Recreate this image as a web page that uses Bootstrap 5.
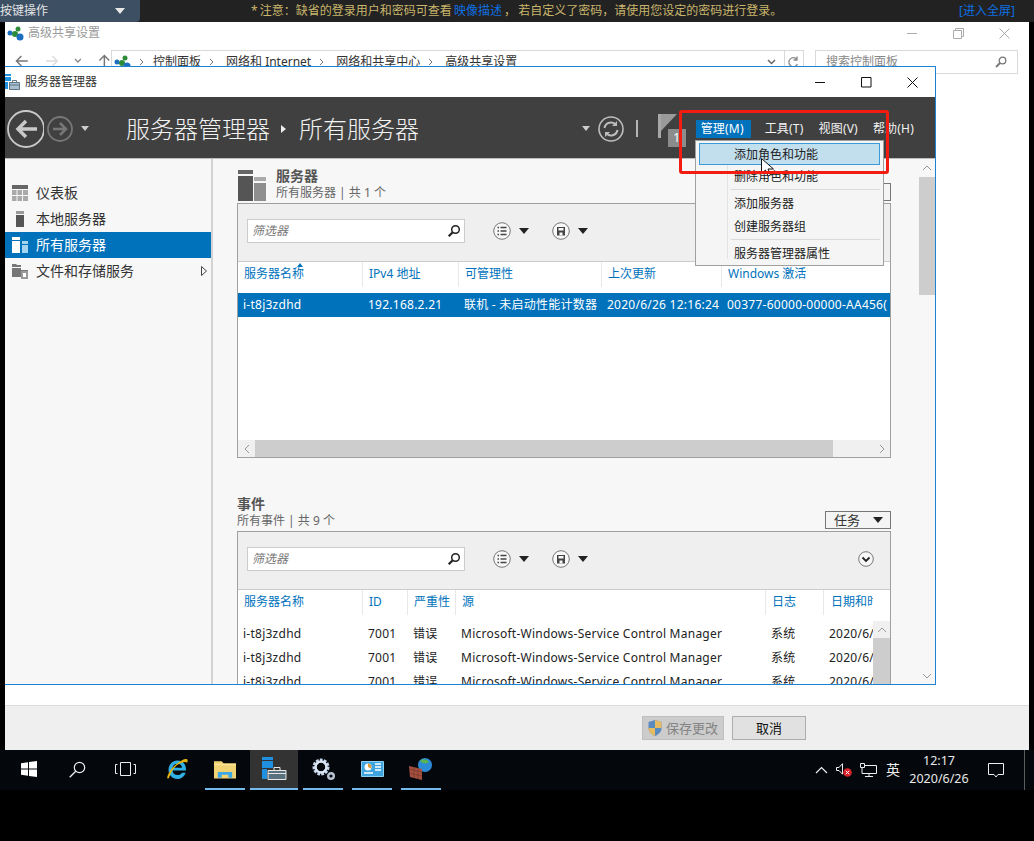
<!DOCTYPE html>
<html lang="zh-CN">
<head>
<meta charset="utf-8">
<title>服务器管理器</title>
<link href="https://cdn.jsdelivr.net/npm/bootstrap@5.3.0/dist/css/bootstrap.min.css" rel="stylesheet">
<style>
html,body{margin:0;background:#000;}
body{font-family:"Noto Sans","Noto Sans CJK SC",sans-serif;font-size:12px;line-height:16px;color:#222;}
.desk{position:relative;width:1034px;height:841px;overflow:hidden;background:#000;}
.top-strip{height:22px;background:#222;}
.key-menu{width:140px;height:22px;background:#3c4f63;border-bottom-right-radius:4px;color:#e4e4e4;padding-right:15px;}
.notice{color:#c9b56c;margin-left:109px;width:710px;white-space:pre;word-spacing:-1px;}
.notice a,.full-link{color:#0f6fe0;text-decoration:none;}
.tri{width:0;height:0;border-left:5px solid transparent;border-right:5px solid transparent;border-top:6px solid #222;display:inline-block;flex:none;}
.tri-white{border-top-color:#e8e8e8;}
.tri-grey{border-left-width:4px;border-right-width:4px;border-top-width:5px;border-top-color:#ccc;}
.back-win{height:728px;width:1024px;margin-left:5px;background:#fff;}
.back-title{height:22px;color:#9a9a9a;padding:0 2px 0 2px;}
.back-title .ttl{margin-left:4px;}
.ctl-box{width:46px;display:flex;justify-content:center;}
.nav-row{height:28px;padding-left:10px;padding-top:6px;}
.nav-arrows{width:96px;}
.addr{width:693px;height:24px;border:1px solid #d9d9d9;padding-left:2px;color:#333;}
.addr .crumb{white-space:nowrap;}
.crumb-first{margin-left:5px;}
.addr-end{margin-left:auto;height:100%;}
.addr-sep{width:1px;background:#d9d9d9;height:100%;margin:0 2px 0 8px;}
.search-back{width:203px;height:24px;border:1px solid #d9d9d9;margin-left:11px;padding:0 10px;color:#888;}
.spacer-fill{flex:1;}
.back-foot{height:45px;background:#efefef;border-top:1px solid #dcdcdc;padding:10px 0 0 637px;gap:8px;}
.w-btn{height:24px;border:1px solid #adadad;background:#e1e1e1;color:#111;font-size:13px;}
.w-btn.off{width:82px;background:#ccc;border-color:#bfbfbf;color:#838383;}
.w-btn.on{width:74px;}
.srv-win{position:absolute;left:5px;top:66px;width:931px;height:619px;background:#fff;border:1px solid #1c82d4;border-left:0;}
.srv-bar{height:30px;color:#333;}
.srv-bar .app-ico{margin-right:5px;}
.srv-bar .ctls{margin-left:auto;}
.srv-bar .c{width:46px;display:flex;justify-content:center;}
.srv-head{height:62px;background:#404040;border-bottom:1px solid #bdbdbd;color:#f2f2f2;padding-top:2px;}
.back-btn{margin-left:1px;flex:none;}
.fwd-btn{margin-left:3px;flex:none;}
.h-title{font-size:24px;line-height:30px;margin-left:37px;white-space:nowrap;font-weight:300;}
.h-sep{margin:0 13px 0 11px;}
.h-right{margin-left:auto;height:100%;padding-right:16px;}
.h-vline{width:2px;height:17px;background:#b5b5b5;margin:0 20px 0 12px;}
.flag-wrap{position:relative;width:30px;height:34px;margin-right:8px;}
.flag-wrap svg{display:block;margin-top:2px;}
.flag-num{position:absolute;left:10px;top:17px;width:18px;height:18px;background:#8c8c8c;color:#fff;text-align:center;font-size:12px;line-height:18px;}
.m-item{height:18px;line-height:18px;padding:0 5px;white-space:nowrap;color:#f2f2f2;letter-spacing:.2px;}
.m-item.act{background:#0072bc;color:#fff;width:55px;}
.m-item.gap-first{margin-left:9px;}
.m-item.gap-next{margin-left:5px;}
.srv-main{height:525px;}
.side{width:206px;flex:none;background:#f7f7f7;padding-top:21px;border-right:2px solid #d3d3d3;box-sizing:content-box;}
.side-item{height:26px;padding-left:7px;font-size:14px;color:#333;}
.side-item .lbl{margin-left:8px;}
.side-item.sel{background:#0072bc;color:#fff;}
.side-item .caret-r{margin-left:auto;margin-right:4px;}
.content{flex:1;background:#f7f7f7;padding:0 28px 0 24px;overflow:hidden;min-width:0;position:relative;}
.sec-head{height:33px;}
.sec-head.first{margin-top:11px;gap:10px;}
.sec-head.second{height:34px;margin-top:39px;}
.sec-t{font-size:14px;font-weight:700;line-height:14px;color:#555;margin-top:-1px;}
.second .sec-t{line-height:15px;}
.sec-s{color:#666;line-height:16px;margin-top:2px;}
.task-btn{margin-left:auto;width:66px;height:18px;border:1px solid #777;background:#f4f4f4;padding:0 7px 0 8px;color:#333;font-size:13px;}
.first .task-btn{position:absolute;right:28px;top:24px;}
.second .task-btn{margin-top:14px;}
.panel{border:1px solid #a0a0a0;background:#fff;width:654px;overflow:hidden;}
.panel.one{height:255px;}
.panel.two{height:160px;border-bottom:0;}
.tools{height:58px;background:#efefef;border-bottom:1px solid #ccc;padding:0 0 3px 9px;flex:none;}
.filter{width:218px;height:24px;border:1px solid #ccc;background:#fff;padding:0 3px 0 4px;color:#7a7a7a;font-style:italic;}
.t-btn{gap:8px;}
.t-btn.a{margin-left:28px;}
.t-btn.b{margin-left:23px;}
.cols-s,.cols-e{display:grid;}
.cols-s{grid-template-columns:124px 96px 143px 120px 1fr;}
.cols-e{grid-template-columns:124px 45px 48px 310px 58px 1fr;}
.heads{height:31px;color:#0072bc;position:relative;}
.heads.cols-e{width:635px;}
.heads>div{padding-left:6px;border-left:1px solid #e8e8e8;line-height:24px;white-space:nowrap;overflow:hidden;height:25px;}
.heads>div:first-child{border-left:0;}
.heads>div:last-child{padding-left:7px;}
.sort-up{position:absolute;left:59px;top:1px;width:0;height:0;border-left:3px solid transparent;border-right:3px solid transparent;border-bottom:4px solid #0072bc;}
.d-row{height:24px;line-height:24px;white-space:nowrap;letter-spacing:.25px;}
.d-row>div{padding-left:6px;overflow:hidden;}
.d-row>div:first-child{padding-left:5px;}
.d-row.sel{background:#0072bc;color:#fff;}
.fill-one{height:123px;}
.h-scroll{height:17px;background:#f0f0f0;}
.h-scroll .arr{width:17px;flex:none;display:flex;justify-content:center;}
.h-thumb{width:578px;background:#cdcdcd;}
.ev-body{position:relative;flex:1;min-height:0;overflow:hidden;padding-top:1px;}
.ev-list{width:635px;overflow:hidden;}
.ev-scroll{position:absolute;right:0;top:0;bottom:0;width:17px;background:#f0f0f0;}
.ev-scroll .up{height:17px;display:flex;justify-content:center;align-items:center;}
.ev-scroll .th{height:60px;background:#cdcdcd;}
.v-scroll{width:16px;flex:none;background:#f7f7f7;}
.v-scroll .up{height:18px;display:flex;justify-content:center;align-items:center;}
.v-scroll .th{height:118px;background:#cdcdcd;}
.v-scroll .dn{margin-top:auto;height:17px;display:flex;justify-content:center;align-items:center;}
.menu-pop{position:absolute;left:695px;top:140px;width:189px;height:126px;background:#f5f5f5;border:1px solid #a0a0a0;padding:2px 3px;color:#222;}
.menu-pop .gutter{position:absolute;left:31px;top:2px;bottom:6px;width:1px;background:#e2e2e2;}
.mi{height:22px;line-height:24px;padding-left:35px;position:relative;}
.mi.hot{background:#c2dfee;outline:1px solid #3b9ad9;outline-offset:-1px;}
.mi-sep{height:1px;background:#dadada;margin:2px 0 2px 32px;}
.m2{margin-top:1px;}
.red-mark{position:absolute;left:679px;top:110px;width:210px;height:64px;border:3px solid #f21d10;border-radius:3px;pointer-events:none;}
.pointer{position:absolute;left:761px;top:158px;}
.taskbar{height:40px;background:#04070c;color:#eee;padding-left:5px;}
.tb-slot{height:40px;flex:none;display:flex;justify-content:center;align-items:center;padding-bottom:2px;}
.tb-plain{width:48px;}
.tb-plain.s-first{width:47px;}
.tb-plain.s-second{margin-left:1px;}
.tb-ie{width:56px;}
.tb-app{width:40px;margin-right:5px;border-bottom:2px solid #76b9ed;padding-bottom:0;}
.tb-app.wide-gap{margin-right:9px;}
.tb-app.cur{width:48px;background:#333;}
.tray{margin-left:auto;height:40px;}
.tray-ch{font-size:14px;margin-left:9px;}
.clock{width:74px;margin-left:2px;text-align:center;font-size:12.500px;line-height:18px;color:#e8e8e8;}
.notify{margin-left:12px;}
.show-desk{width:1px;height:40px;background:#5c5c5c;margin:0 9px 0 20px;}
</style>
</head>
<body>
<div class="desk">
  <div class="top-strip d-flex align-items-center">
    <div class="key-menu d-flex align-items-center justify-content-between"><span>按键操作</span><span class="tri tri-white"></span></div>
    <div class="notice"> * 注意：缺省的登录用户和密码可查看 <a href="#">映像描述</a> ， 若自定义了密码，请使用您设定的密码进行登录。</div>
    <a class="full-link" href="#">[进入全屏]</a>
  </div>

  <div class="back-win d-flex flex-column">
    <div class="back-title d-flex align-items-center">
      <svg width="17" height="15" viewBox="0 0 17 15"><circle cx="3" cy="7" r="2.500" fill="#1c6fc0"/><circle cx="11" cy="3" r="2.500" fill="#2e8b3a"/><circle cx="8" cy="8" r="3" fill="#2e8b3a"/><circle cx="13" cy="11" r="3.500" fill="#1c6fc0"/></svg>
      <span class="ttl">高级共享设置</span>
      <div class="d-flex align-items-center ms-auto">
        <span class="ctl-box"><svg width="11" height="11" viewBox="0 0 11 11"><path d="M0 5.500h10" stroke="#aaa"/></svg></span>
        <span class="ctl-box"><svg width="11" height="11" viewBox="0 0 11 11"><path d="M.5 2.500h8v8h-8zM2.500 2.500v-2h8v8h-2" fill="none" stroke="#aaa"/></svg></span>
        <span class="ctl-box"><svg width="11" height="11" viewBox="0 0 11 11"><path d="M.5.500l10 10M10.500.5l-10 10" stroke="#aaa"/></svg></span>
      </div>
    </div>
    <div class="nav-row d-flex align-items-start">
      <div class="nav-arrows d-flex align-items-center pt-1">
        <svg class="me-3" width="14" height="12" viewBox="0 0 14 12"><path d="M13 6H2M6.500 1L1.500 6l5 5" fill="none" stroke="#777" stroke-width="1.500"/></svg>
        <svg class="me-3" width="14" height="12" viewBox="0 0 14 12"><path d="M1 6h11M7.500 1l5 5-5 5" fill="none" stroke="#ddd" stroke-width="1.500"/></svg>
        <svg width="8" height="6" viewBox="0 0 8 6" class="me-3"><path d="M1 1l3 3 3-3" fill="none" stroke="#888" stroke-width="1.300"/></svg>
        <svg width="13" height="13" viewBox="0 0 13 13"><path d="M6.500 13V2M1.500 6.500l5-5 5 5" fill="none" stroke="#777" stroke-width="1.500"/></svg>
      </div>
      <div class="addr d-flex align-items-center">
        <svg width="17" height="15" viewBox="0 0 17 15"><circle cx="3" cy="7" r="2.500" fill="#1c6fc0"/><circle cx="11" cy="3" r="2.500" fill="#2e8b3a"/><circle cx="8" cy="8" r="3" fill="#2e8b3a"/><circle cx="13" cy="11" r="3.500" fill="#1c6fc0"/></svg>
        <svg class="ms-2" width="5" height="8" viewBox="0 0 5 8"><path d="M1 1l3 3-3 3" fill="none" stroke="#777"/></svg>
        <span class="crumb crumb-first ps-1">控制面板</span>
        <svg class="ms-2" width="5" height="8" viewBox="0 0 5 8"><path d="M1 1l3 3-3 3" fill="none" stroke="#777"/></svg>
        <span class="crumb ms-2 ps-1">网络和 Internet</span>
        <svg class="ms-2" width="5" height="8" viewBox="0 0 5 8"><path d="M1 1l3 3-3 3" fill="none" stroke="#777"/></svg>
        <span class="crumb ms-2 ps-1">网络和共享中心</span>
        <svg class="ms-2" width="5" height="8" viewBox="0 0 5 8"><path d="M1 1l3 3-3 3" fill="none" stroke="#777"/></svg>
        <span class="crumb ms-2 ps-1">高级共享设置</span>
        <div class="addr-end d-flex align-items-center">
          <svg width="9" height="6" viewBox="0 0 9 6"><path d="M1 1l3.500 3.500L8 1" fill="none" stroke="#666" stroke-width="1.500"/></svg>
          <span class="addr-sep"></span>
          <svg class="me-1" width="12" height="13" viewBox="0 0 12 13"><path d="M10 3.500A4.500 4.500 0 1 0 10.500 8M10 .5v3.500H6.500" fill="none" stroke="#888" stroke-width="1.300"/></svg>
        </div>
      </div>
      <div class="search-back d-flex align-items-center justify-content-between">
        <span>搜索控制面板</span>
        <svg width="12" height="12" viewBox="0 0 12 12"><circle cx="7.500" cy="4.500" r="3.300" fill="none" stroke="#777" stroke-width="1.300"/><path d="M5 7l-4 4" stroke="#777" stroke-width="1.800"/></svg>
      </div>
    </div>
    <div class="spacer-fill"></div>
    <div class="back-foot d-flex">
      <div class="w-btn off d-flex align-items-center justify-content-center gap-1">
        <svg width="14" height="16" viewBox="0 0 14 16"><path d="M7 0l6.500 2v6c0 4-3 6.500-6.500 8C3.500 14.500.5 12 .5 8V2z" fill="#5b8ac0"/><path d="M7 0l6.500 2v6H7zM7 8v8C3.500 14.500.5 12 .5 8z" fill="#e6bc62"/></svg>
        <span>保存更改</span>
      </div>
      <div class="w-btn on d-flex align-items-center justify-content-center">取消</div>
    </div>
  </div>

  <div class="taskbar d-flex align-items-center">
    <div class="tb-slot tb-plain s-first"><svg width="16" height="16" viewBox="0 0 16 16"><path d="M0 2.300l7-1V7.600H0zM8 1.100L16 0v7.600H8zM0 8.500h7v6.200l-7-1zM8 8.500h8V16l-8-1.100z" fill="#fff"/></svg></div>
    <div class="tb-slot tb-plain s-second"><svg width="17" height="17" viewBox="0 0 17 17"><circle cx="10.500" cy="6.500" r="5.200" fill="none" stroke="#eee" stroke-width="1.200"/><path d="M6.700 10.300L.7 16.300" stroke="#eee" stroke-width="1.300"/></svg></div>
    <div class="tb-slot tb-plain"><svg width="21" height="14" viewBox="0 0 21 14"><path d="M5.500.5h10v13h-10z" fill="none" stroke="#eee"/><path d="M2.500 2.500H.5v9h2M18.500 2.500h2v9h-2" fill="none" stroke="#eee"/></svg></div>
    <div class="tb-slot tb-ie"><svg width="24" height="24" viewBox="0 0 24 24"><path d="M21 13.500H7.500c.3 3 2.500 4.500 5 4.500 2 0 3.500-.8 4.500-2.300h3.800C19 19.800 16 22 12.300 22 7.500 22 3.500 18 3.500 12.800 3.500 7.600 7.500 3.500 12.500 3.500c5 0 8.500 4 8.500 8.500zM7.500 10.800h9.500c-.2-2.400-2-4-4.500-4s-4.600 1.600-5 4z" fill="#2fb1e6" fill-rule="evenodd"/><path d="M4 21C1 23 2 19 5 14 9 8 17 2 21 2c2 0 2 2 1 4-1-2-4-1-8 1C8 10 5 18 4 21z" fill="#e5b30f"/></svg></div>
    <div class="tb-slot tb-app"><svg width="22" height="19" viewBox="0 0 23 19"><path d="M0 1h8l2 2h13v16H0z" fill="#f2d374"/><path d="M0 4h23v1H0z" fill="#ffe9a6"/><path d="M4 18v-6h15v6h-4v-3H8v3z" fill="#3da8e6"/></svg></div>
    <div class="tb-slot tb-app cur"><svg width="25" height="24" viewBox="0 0 25 24"><path d="M0 0h11v3H0z" fill="#1f8fe0"/><path d="M0 4h11v7H0zM0 12h5v10H0z" fill="#1f8fe0"/><path d="M6 13.500h18v9H6z" fill="#59707f" stroke="#e8e8e8"/><path d="M6 16.500h18" stroke="#e8e8e8"/><path d="M12 13v-2.500h6V13" fill="none" stroke="#e8e8e8"/></svg></div>
    <div class="tb-slot tb-app wide-gap"><svg width="25" height="25" viewBox="0 0 25 25"><circle cx="10" cy="10" r="6.500" fill="none" stroke="#c5d5ec" stroke-width="4" stroke-dasharray="2.500 1.100"/><circle cx="10" cy="10" r="5.500" fill="none" stroke="#dbe6f5" stroke-width="2.500"/><circle cx="20" cy="19" r="2.800" fill="none" stroke="#b8c4d4" stroke-width="2.400"/></svg></div>
    <div class="tb-slot tb-app wide-gap"><svg width="23" height="16" viewBox="0 0 23 16"><path d="M.5.500h22v15H.500z" fill="#3fa3de" stroke="#8fd0f2"/><circle cx="7" cy="6" r="3.500" fill="#fff"/><path d="M7 2.500V6l3 1.500A3.500 3.500 0 0 0 7 2.500z" fill="#e29a2c"/><path d="M14 3h6M14 6h6M14 9h6M3 12h9" stroke="#fff" stroke-width="1.400"/></svg></div>
    <div class="tb-slot tb-app"><svg width="24" height="24" viewBox="0 0 24 24"><circle cx="16" cy="8" r="7" fill="#2c8bd6"/><path d="M11 4c3-3 7-2 9 1-2 2-6 2-9-1z" fill="#59b34f"/><path d="M0 9l13 3v11L1 20z" fill="#a4503f"/><path d="M0 12l13 3M.5 16l12.500 3M5 10v11M9 11v11" stroke="#7a362a" stroke-width=".7"/></svg></div>
    <div class="tray d-flex align-items-center">
      <svg class="me-2" width="13" height="8" viewBox="0 0 13 8"><path d="M1 7l5.500-5.500L12 7" fill="none" stroke="#eee" stroke-width="1.200"/></svg>
      <svg class="me-2" width="16" height="14" viewBox="0 0 16 14"><path d="M.5 4.500h2.500L6.500.7v10.500L3 7.500H.5z" fill="none" stroke="#eee"/><circle cx="11.500" cy="9.500" r="4.300" fill="#d8232a"/><path d="M9.800 7.800l3.400 3.400M13.200 7.800l-3.400 3.400" stroke="#fff"/></svg>
      <svg width="17" height="14" viewBox="0 0 17 14"><path d="M3 2.500h13.500v8H2V5M9 10.500v3M5 13.500h8" fill="none" stroke="#eee"/><path d="M.5.500h4v4h-4z" fill="#04070c" stroke="#eee"/></svg>
      <span class="tray-ch">英</span>
      <div class="clock"><div>12:17</div><div>2020/6/26</div></div>
      <svg class="notify" width="16" height="16" viewBox="0 0 16 16"><path d="M.5 1.500h15v11H10L8 15l-2-2.500H.5z" fill="none" stroke="#eee"/></svg>
      <span class="show-desk"></span>
    </div>
  </div>

  <div class="srv-win d-flex flex-column">
    <div class="srv-bar d-flex align-items-center">
      <svg class="app-ico" width="15" height="16" viewBox="0 0 15 16"><path d="M0 0h6v2H0zM0 3h6v4H0zM0 8h3v7H0z" fill="#1f8fe0"/><path d="M4.500 8.500h10v7h-10z" fill="#a9bfcf" stroke="#5f7686"/><path d="M4.500 11h10" stroke="#5f7686"/><path d="M7.500 8V6.500h4V8" fill="none" stroke="#5f7686"/></svg>
      <span>服务器管理器</span>
      <div class="ctls d-flex align-items-center">
        <span class="c"><svg width="11" height="11" viewBox="0 0 11 11"><path d="M0 5.500h10" stroke="#111"/></svg></span>
        <span class="c"><svg width="11" height="11" viewBox="0 0 11 11"><path d="M.5.500h9.500v9.500H.5z" fill="none" stroke="#111"/></svg></span>
        <span class="c"><svg width="11" height="11" viewBox="0 0 11 11"><path d="M.5.500l10 10M10.500.5l-10 10" stroke="#111"/></svg></span>
      </div>
    </div>
    <div class="srv-head d-flex align-items-center">
      <svg class="back-btn" width="38" height="38" viewBox="0 0 38 38"><circle cx="20" cy="19" r="18" fill="none" stroke="#c9c9c9" stroke-width="1.800"/><path d="M31 19H12M20 11l-8 8 8 8" fill="none" stroke="#c9c9c9" stroke-width="3.500"/></svg>
      <svg class="fwd-btn" width="26" height="26" viewBox="0 0 26 26"><circle cx="13" cy="13" r="12" fill="none" stroke="#777" stroke-width="1.800"/><path d="M6 13h13M13 7l6 6-6 6" fill="none" stroke="#777" stroke-width="2.500"/></svg>
      <span class="tri tri-grey ms-2"></span>
      <div class="h-title d-flex align-items-center">
        <span>服务器管理器</span>
        <svg class="h-sep" width="5" height="8" viewBox="0 0 5 8"><path d="M0 0l5 4-5 4z" fill="#eee"/></svg>
        <span>所有服务器</span>
      </div>
      <div class="h-right d-flex align-items-center">
        <span class="tri tri-grey me-2"></span>
        <svg width="26" height="26" viewBox="0 0 26 26"><circle cx="13" cy="13" r="12" fill="none" stroke="#bdbdbd" stroke-width="1.600"/><path d="M6.500 12a6.500 6.500 0 0 1 11.500-3M19.500 14a6.500 6.500 0 0 1-11.500 3" fill="none" stroke="#bdbdbd" stroke-width="2"/><path d="M19 5v5h-5zM7 21v-5h5z" fill="#bdbdbd"/></svg>
        <span class="h-vline"></span>
        <div class="flag-wrap">
          <svg width="19" height="24" viewBox="0 0 19 24"><path d="M0 0h3v24H0z" fill="#a8a8a8"/><path d="M3 0h16L3 17z" fill="#9a9a9a"/></svg>
          <span class="flag-num">1</span>
        </div>
        <span class="m-item act">管理(M)</span>
        <span class="m-item gap-first">工具(T)</span>
        <span class="m-item gap-next">视图(V)</span>
        <span class="m-item gap-next">帮助(H)</span>
      </div>
    </div>
    <div class="srv-main d-flex">
      <div class="side">
        <div class="side-item d-flex align-items-center"><svg width="16" height="16" viewBox="0 0 16 16"><path d="M0 0h16v4H0z" fill="#666"/><path d="M0 5h4.500v5H0zM5.500 5H10v5H5.500zM11 5h5v5h-5zM0 11h4.500v5H0zM5.500 11H10v5H5.500zM11 11h5v5h-5z" fill="#aaa"/></svg><span class="lbl">仪表板</span></div>
        <div class="side-item d-flex align-items-center"><svg width="16" height="16" viewBox="0 0 16 16"><path d="M4 0h8v3H4z" fill="#999"/><path d="M4 4h8v12H4z" fill="#555"/></svg><span class="lbl">本地服务器</span></div>
        <div class="side-item sel d-flex align-items-center"><svg width="16" height="16" viewBox="0 0 16 16"><path d="M0 0h8v3H0zM0 4h8v12H0z" fill="#fff"/><path d="M10 4h6v3h-6zM10 8h6v8h-6z" fill="#a5d4f0"/></svg><span class="lbl">所有服务器</span></div>
        <div class="side-item d-flex align-items-center"><svg width="16" height="16" viewBox="0 0 16 16"><path d="M0 1h4l1 1h4v2H0zM0 5h9v2h7v3H9v4H0z" fill="#777"/><path d="M9 8h7v8H9z" fill="#999"/><path d="M11 10h3v4h-3z" fill="#fff"/></svg><span class="lbl">文件和存储服务</span><svg class="caret-r" width="6" height="10" viewBox="0 0 6 10"><path d="M.5.500l5 4.500-5 4.500z" fill="none" stroke="#444"/></svg></div>
      </div>
      <div class="content">
        <div class="sec-head first d-flex">
          <svg class="flex-none" width="29" height="31" viewBox="0 0 29 31"><path d="M1 0h15v4H1z" fill="#666"/><path d="M1 6h15v25H1z" fill="#555"/><path d="M17 7h12v4H17z" fill="#aaa"/><path d="M17 13h12v18H17z" fill="#8e8e8e"/></svg>
          <div><div class="sec-t">服务器</div><div class="sec-s">所有服务器 | 共 1 个</div></div>
          <div class="task-btn d-flex align-items-center justify-content-between">任务<span class="tri"></span></div>
        </div>
        <div class="panel one d-flex flex-column">
          <div class="tools d-flex align-items-center">
            <div class="filter d-flex align-items-center justify-content-between"><span>筛选器</span>
              <svg width="14" height="14" viewBox="0 0 14 14"><circle cx="8.500" cy="5.500" r="3.800" fill="none" stroke="#222" stroke-width="1.500"/><path d="M5.700 8.300l-4 4" stroke="#222" stroke-width="2.200"/></svg></div>
            <div class="t-btn a d-flex align-items-center"><svg width="18" height="18" viewBox="0 0 18 18"><circle cx="9" cy="9" r="8.300" fill="#f7f7f7" stroke="#777"/><path d="M7.500 5.500h6M7.500 9h6M7.500 12.500h6M4.500 5.500h1.500M4.500 9h1.500M4.500 12.500h1.500" stroke="#444" stroke-width="1.400"/></svg><span class="tri"></span></div>
            <div class="t-btn b d-flex align-items-center"><svg width="18" height="18" viewBox="0 0 18 18"><circle cx="9" cy="9" r="8.300" fill="#f7f7f7" stroke="#777"/><path d="M5 5h8v8.500H5z" fill="#444"/><path d="M6.500 6h5v2.500h-5zM7.500 10.500h3v3h-3z" fill="#f7f7f7"/></svg><span class="tri"></span></div>
          </div>
          <div class="heads cols-s flex-none">
            <div>服务器名称</div><div>IPv4 地址</div><div>可管理性</div><div>上次更新</div><div>Windows 激活</div><span class="sort-up"></span>
          </div>
          <div class="d-row sel cols-s flex-none"><div>i-t8j3zdhd</div><div>192.168.2.21</div><div>联机 - 未启动性能计数器</div><div>2020/6/26 12:16:24</div><div>00377-60000-00000-AA456(</div></div>
          <div class="fill-one flex-none"></div>
          <div class="h-scroll d-flex align-items-center flex-none">
            <span class="arr"><svg width="6" height="10" viewBox="0 0 6 10"><path d="M5 1L1 5l4 4" fill="none" stroke="#999"/></svg></span>
            <div class="h-thumb h-100"></div>
            <span class="arr ms-auto"><svg width="6" height="10" viewBox="0 0 6 10"><path d="M1 1l4 4-4 4" fill="none" stroke="#999"/></svg></span>
          </div>
        </div>
        <div class="sec-head second d-flex">
          <div><div class="sec-t">事件</div><div class="sec-s">所有事件 | 共 9 个</div></div>
          <div class="task-btn d-flex align-items-center justify-content-between">任务<span class="tri"></span></div>
        </div>
        <div class="panel two d-flex flex-column">
          <div class="tools d-flex align-items-center">
            <div class="filter d-flex align-items-center justify-content-between"><span>筛选器</span>
              <svg width="14" height="14" viewBox="0 0 14 14"><circle cx="8.500" cy="5.500" r="3.800" fill="none" stroke="#222" stroke-width="1.500"/><path d="M5.700 8.300l-4 4" stroke="#222" stroke-width="2.200"/></svg></div>
            <div class="t-btn a d-flex align-items-center"><svg width="18" height="18" viewBox="0 0 18 18"><circle cx="9" cy="9" r="8.300" fill="#f7f7f7" stroke="#777"/><path d="M7.500 5.500h6M7.500 9h6M7.500 12.500h6M4.500 5.500h1.500M4.500 9h1.500M4.500 12.500h1.500" stroke="#444" stroke-width="1.400"/></svg><span class="tri"></span></div>
            <div class="t-btn b d-flex align-items-center"><svg width="18" height="18" viewBox="0 0 18 18"><circle cx="9" cy="9" r="8.300" fill="#f7f7f7" stroke="#777"/><path d="M5 5h8v8.500H5z" fill="#444"/><path d="M6.500 6h5v2.500h-5zM7.500 10.500h3v3h-3z" fill="#f7f7f7"/></svg><span class="tri"></span></div>
            <svg class="ms-auto me-3" width="16" height="16" viewBox="0 0 16 16"><circle cx="8" cy="8" r="7.300" fill="#f7f7f7" stroke="#777"/><path d="M4.500 6.500L8 10l3.500-3.500" fill="none" stroke="#222" stroke-width="1.800"/></svg>
          </div>
          <div class="heads cols-e flex-none">
            <div>服务器名称</div><div>ID</div><div>严重性</div><div>源</div><div>日志</div><div>日期和时</div>
          </div>
          <div class="ev-body">
            <div class="ev-list">
              <div class="d-row cols-e"><div>i-t8j3zdhd</div><div>7001</div><div>错误</div><div>Microsoft-Windows-Service Control Manager</div><div>系统</div><div>2020/6/26</div></div>
              <div class="d-row cols-e"><div>i-t8j3zdhd</div><div>7001</div><div>错误</div><div>Microsoft-Windows-Service Control Manager</div><div>系统</div><div>2020/6/26</div></div>
              <div class="d-row cols-e"><div>i-t8j3zdhd</div><div>7001</div><div>错误</div><div>Microsoft-Windows-Service Control Manager</div><div>系统</div><div>2020/6/26</div></div>
            </div>
            <div class="ev-scroll"><div class="up"><svg width="10" height="6" viewBox="0 0 10 6"><path d="M1 5l4-4 4 4" fill="none" stroke="#999"/></svg></div><div class="th"></div></div>
          </div>
        </div>
      </div>
      <div class="v-scroll d-flex flex-column">
        <div class="up"><svg width="10" height="6" viewBox="0 0 10 6"><path d="M1 5l4-4 4 4" fill="none" stroke="#999"/></svg></div>
        <div class="th"></div>
        <div class="dn"><svg width="10" height="6" viewBox="0 0 10 6"><path d="M1 1l4 4 4-4" fill="none" stroke="#999"/></svg></div>
      </div>
    </div>
  </div>

  <div class="menu-pop">
    <span class="gutter"></span>
    <div class="mi hot">添加角色和功能</div>
    <div class="mi">删除角色和功能</div>
    <div class="mi-sep"></div>
    <div class="mi">添加服务器</div>
    <div class="mi m2">创建服务器组</div>
    <div class="mi-sep"></div>
    <div class="mi">服务器管理器属性</div>
  </div>
  <svg class="pointer" width="14" height="20" viewBox="0 0 14 20"><path d="M.5.500v15l4-3.500 2.500 6 2.500-1-2.500-6h5.500z" fill="#fff" stroke="#111"/></svg>
  <div class="red-mark"></div>
</div>
</body>
</html>
